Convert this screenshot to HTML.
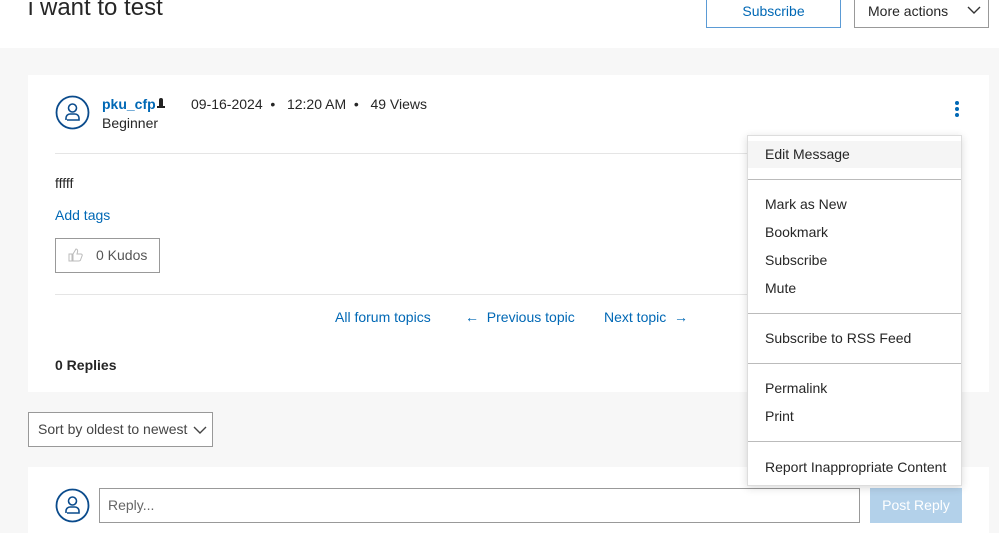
<!DOCTYPE html>
<html><head><meta charset="utf-8"><style>
*{margin:0;padding:0;box-sizing:border-box}
body{width:999px;height:533px;overflow:hidden;background:#f7f7f7;font-family:"Liberation Sans",sans-serif;color:#262626;position:relative}
.a{position:absolute}
.blue{color:#0068b5}
.t{font-size:14px;white-space:nowrap}
</style></head><body>
<div class="a" style="left:0;top:0;width:999px;height:48px;background:#fff"></div>
<div class="a" style="left:28px;top:-6px;font-size:24px;color:#262626">i want to test</div>
<div class="a" style="left:706px;top:-2px;width:135px;height:30px;border:1px solid #5b9bd5;color:#0068b5;font-size:14px;text-align:center;line-height:24px">Subscribe</div>
<div class="a" style="left:854px;top:-2px;width:135px;height:30px;border:1px solid #999;font-size:14px;line-height:24px;padding-left:13px">More actions</div>
<svg class="a" style="left:967px;top:5px" width="14" height="10"><path d="M1 2l6 6 6-6" fill="none" stroke="#333" stroke-width="1.4"/></svg>

<div class="a" style="left:28px;top:75px;width:961px;height:317px;background:#fff"></div>
<svg class="a" style="left:55px;top:95px" width="35" height="35" viewBox="0 0 35 35"><circle cx="17.5" cy="17.5" r="16" fill="none" stroke="#0a4b8c" stroke-width="1.8"/><circle cx="17.5" cy="13" r="4" fill="none" stroke="#0a4b8c" stroke-width="1.6"/><path d="M11 25v-2a4 4 0 0 1 4-4h5a4 4 0 0 1 4 4v2h-12" fill="none" stroke="#0a4b8c" stroke-width="1.6"/></svg>
<div class="a t blue" style="left:102px;top:96px;font-weight:bold">pku_cfp</div>
<div class="a" style="left:159px;top:98px;width:4px;height:8px;background:#222;border-radius:2px 2px 0 0"></div>
<div class="a" style="left:157px;top:106px;width:8px;height:2px;background:#222"></div>
<div class="a t" style="left:102px;top:115px">Beginner</div>
<div class="a t" style="left:191px;top:96px">09-16-2024 &nbsp;•&nbsp;&nbsp; 12:20 AM &nbsp;•&nbsp;&nbsp; 49 Views</div>
<div class="a" style="left:955px;top:101px;width:4px;height:4px;border-radius:2px;background:#0068b5;box-shadow:0 6px 0 #0068b5,0 12px 0 #0068b5"></div>
<div class="a" style="left:55px;top:153px;width:700px;height:1px;background:#e5e5e5"></div>
<div class="a t" style="left:55px;top:175px">fffff</div>
<div class="a t blue" style="left:55px;top:207px">Add tags</div>
<div class="a" style="left:55px;top:238px;width:105px;height:35px;border:1px solid #999"></div>
<svg class="a" style="left:68px;top:248px" width="15" height="14"><path d="M1 6h3v7H1zM5 6l3-5c1 0 2 1 1.5 3L9 6h4c1 0 1.5 1 1 2l-1.5 4c-.3 1-1 1-2 1H5z" fill="none" stroke="#bbb"/></svg>
<div class="a t" style="left:96px;top:247px;color:#555">0 Kudos</div>
<div class="a" style="left:55px;top:294px;width:700px;height:1px;background:#e5e5e5"></div>
<div class="a t blue" style="left:335px;top:309px">All forum topics</div>
<div class="a t blue" style="left:465px;top:309px">←&nbsp; Previous topic</div>
<div class="a t blue" style="left:604px;top:309px">Next topic &nbsp;→</div>
<div class="a t" style="left:55px;top:357px;font-weight:bold">0 Replies</div>

<div class="a" style="left:28px;top:412px;width:185px;height:35px;border:1px solid #999;background:#fff"></div>
<div class="a t" style="left:38px;top:421px;color:#444">Sort by oldest to newest</div>
<svg class="a" style="left:193px;top:425px" width="14" height="10"><path d="M1 2l6 6 6-6" fill="none" stroke="#444" stroke-width="1.4"/></svg>

<div class="a" style="left:28px;top:467px;width:961px;height:66px;background:#fff"></div>
<svg class="a" style="left:55px;top:488px" width="35" height="35" viewBox="0 0 35 35"><circle cx="17.5" cy="17.5" r="16" fill="none" stroke="#0a4b8c" stroke-width="1.8"/><circle cx="17.5" cy="13" r="4" fill="none" stroke="#0a4b8c" stroke-width="1.6"/><path d="M11 25v-2a4 4 0 0 1 4-4h5a4 4 0 0 1 4 4v2h-12" fill="none" stroke="#0a4b8c" stroke-width="1.6"/></svg>
<div class="a" style="left:99px;top:488px;width:761px;height:35px;border:1px solid #999"></div>
<div class="a t" style="left:108px;top:497px;color:#666">Reply...</div>
<div class="a" style="left:870px;top:488px;width:92px;height:35px;background:#b3d1ea;color:#fff;font-size:14px;text-align:center;line-height:35px">Post Reply</div>

<div class="a" style="left:747px;top:135px;width:215px;height:351px;background:#fff;border:1px solid #ddd;box-shadow:0 2px 8px rgba(0,0,0,.15)">
<div class="a" style="left:0;top:5px;width:213px;height:27px;background:#f5f5f5"></div>
<div class="a" style="left:0;top:43px;width:213px;height:1px;background:#bbb"></div>
<div class="a" style="left:0;top:177px;width:213px;height:1px;background:#bbb"></div>
<div class="a" style="left:0;top:227px;width:213px;height:1px;background:#bbb"></div>
<div class="a" style="left:0;top:305px;width:213px;height:1px;background:#bbb"></div>
<div class="a t" style="left:17px;top:10px">Edit Message</div>
<div class="a t" style="left:17px;top:60px">Mark as New</div>
<div class="a t" style="left:17px;top:88px">Bookmark</div>
<div class="a t" style="left:17px;top:116px">Subscribe</div>
<div class="a t" style="left:17px;top:144px">Mute</div>
<div class="a t" style="left:17px;top:194px">Subscribe to RSS Feed</div>
<div class="a t" style="left:17px;top:244px">Permalink</div>
<div class="a t" style="left:17px;top:272px">Print</div>
<div class="a t" style="left:17px;top:323px">Report Inappropriate Content</div>
</div>
</body></html>
